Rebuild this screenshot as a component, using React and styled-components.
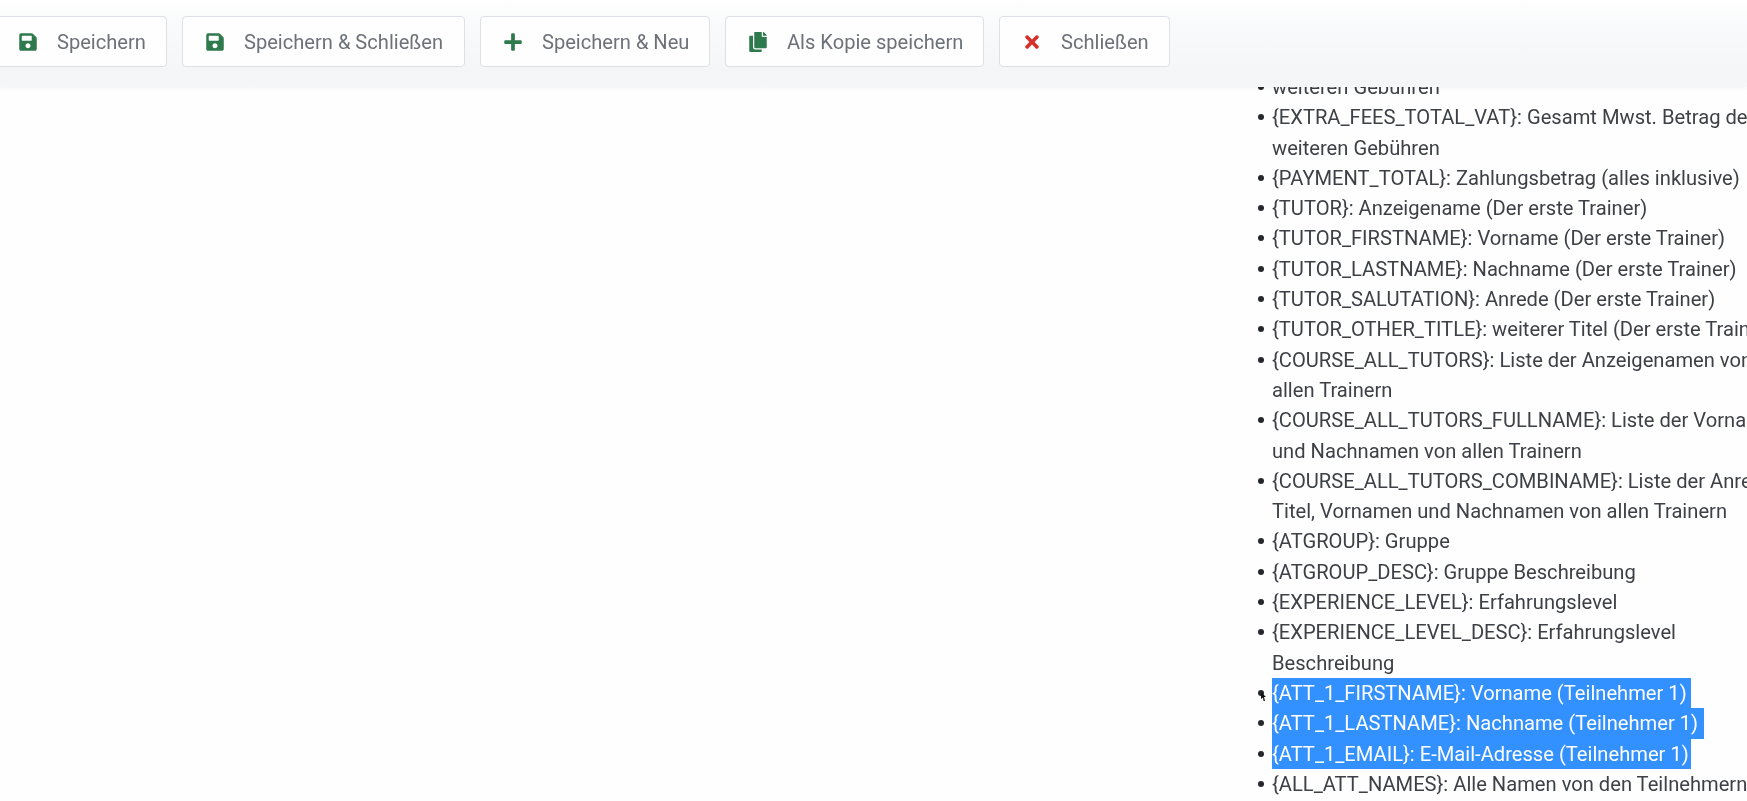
import React from "react";
import styled, { createGlobalStyle } from "styled-components";
import { FaSave, FaPlus, FaCopy, FaTimes } from "react-icons/fa";

const Global = createGlobalStyle`
  html, body { margin: 0; height: 100%; overflow: hidden; background: #fff; }
  body { font-family: Roboto, "Liberation Sans", sans-serif; }
`;

const Page = styled.div`
  position: relative;
  width: 1747px;
  height: 801px;
  overflow: hidden;
  background: #fefefe;
  filter: blur(0.5px);
`;

const Toolbar = styled.div`
  position: relative;
  z-index: 2;
  height: 87px;
  box-sizing: border-box;
  padding: 16px 0 0 0;
  display: flex;
  align-items: flex-start;
  gap: 15px;
  background: linear-gradient(180deg, #fefefe 0%, #f9fafb 30%, #f3f5f7 88%, #f6f7f8 100%);
  box-shadow: 0 1px 3px rgba(40, 50, 60, 0.06);
`;

const Button = styled.div`
  height: 51px;
  box-sizing: border-box;
  width: ${(p) => p.$w}px;
  margin-left: ${(p) => p.$ml || 0}px;
  flex: none;
  display: flex;
  align-items: center;
  padding-left: 22px;
  background: #fefefe;
  border: 1px solid #dde0e4;
  border-radius: 4px;
  color: #6d7278;
  font-size: 20.1px;
`;

const IconSlot = styled.span`
  width: 20px;
  margin-right: 19px;
  display: flex;
  justify-content: center;
  font-size: 20px;
  color: ${(p) => p.$c};
`;

const Body = styled.div`
  position: relative;
  z-index: 1;
  margin: -15px 0 0 1272px;
`;

const List = styled.ul`
  margin: 0;
  padding: 0;
  width: 620px;
  list-style: none;
  font-size: 20.15px;
  line-height: 30.3px;
  color: #3d4146;
`;

const Item = styled.li`
  position: relative;
  white-space: nowrap;
  &::before {
    content: "";
    position: absolute;
    left: -14px;
    top: 12px;
    width: 6px;
    height: 6px;
    border-radius: 50%;
    background: #24272b;
  }
`;

const Selected = styled.span`
  display: inline-block;
  background: #3390ff;
  color: #fff;
  padding-right: ${(p) => p.$pad}px;
`;

const Pointer = styled.svg`
  position: absolute;
  left: -11px;
  top: 14px;
`;

const buttons = [
  { t: "Speichern", w: 172, ml: -5, I: FaSave, c: "#2f7a4d" },
  { t: "Speichern & Schließen", w: 283, I: FaSave, c: "#2f7a4d" },
  { t: "Speichern & Neu", w: 230, I: FaPlus, c: "#2f7a4d" },
  { t: "Als Kopie speichern", w: 259, I: FaCopy, c: "#2f7a4d" },
  { t: "Schließen", w: 171, I: FaTimes, c: "#d5302a" },
];

const rows = [
  ["weiteren Gebühren"],
  ["{EXTRA_FEES_TOTAL_VAT}: Gesamt Mwst. Betrag der", "weiteren Gebühren"],
  ["{PAYMENT_TOTAL}: Zahlungsbetrag (alles inklusive)"],
  ["{TUTOR}: Anzeigename (Der erste Trainer)"],
  ["{TUTOR_FIRSTNAME}: Vorname (Der erste Trainer)"],
  ["{TUTOR_LASTNAME}: Nachname (Der erste Trainer)"],
  ["{TUTOR_SALUTATION}: Anrede (Der erste Trainer)"],
  ["{TUTOR_OTHER_TITLE}: weiterer Titel (Der erste Trainer)"],
  ["{COURSE_ALL_TUTORS}: Liste der Anzeigenamen von", "allen Trainern"],
  ["{COURSE_ALL_TUTORS_FULLNAME}: Liste der Vornamen", "und Nachnamen von allen Trainern"],
  ["{COURSE_ALL_TUTORS_COMBINAME}: Liste der Anrede,", "Titel, Vornamen und Nachnamen von allen Trainern"],
  ["{ATGROUP}: Gruppe"],
  ["{ATGROUP_DESC}: Gruppe Beschreibung"],
  ["{EXPERIENCE_LEVEL}: Erfahrungslevel"],
  ["{EXPERIENCE_LEVEL_DESC}: Erfahrungslevel", "Beschreibung"],
];

const selected = [
  { t: "{ATT_1_FIRSTNAME}: Vorname (Teilnehmer 1)", pad: 4, pointer: true },
  { t: "{ATT_1_LASTNAME}: Nachname (Teilnehmer 1)", pad: 6 },
  { t: "{ATT_1_EMAIL}: E-Mail-Adresse (Teilnehmer 1)", pad: 2 },
];

export default function App() {
  return (
    <Page>
      <Global />
      <Toolbar>
        {buttons.map(({ t, w, ml, I, c }) => (
          <Button key={t} $w={w} $ml={ml}>
            <IconSlot $c={c}><I /></IconSlot>
            {t}
          </Button>
        ))}
      </Toolbar>
      <Body>
        <List>
          {rows.map((lines, i) => (
            <Item key={i}>
              {lines.map((l, j) => (
                <React.Fragment key={j}>
                  {j > 0 && <br />}
                  {l}
                </React.Fragment>
              ))}
            </Item>
          ))}
          {selected.map((s) => (
            <Item key={s.t}>
              <Selected $pad={s.pad}>{s.t}</Selected>
              {s.pointer && (
                <Pointer width="6" height="9" viewBox="0 0 6 9">
                  <path d="M0 0 L5 5 L3 5 L4 9 L2.5 9 L2 5.5 L0 7 Z" fill="#111" />
                </Pointer>
              )}
            </Item>
          ))}
          <Item>{"{ALL_ATT_NAMES}: Alle Namen von den Teilnehmern"}</Item>
        </List>
      </Body>
    </Page>
  );
}
